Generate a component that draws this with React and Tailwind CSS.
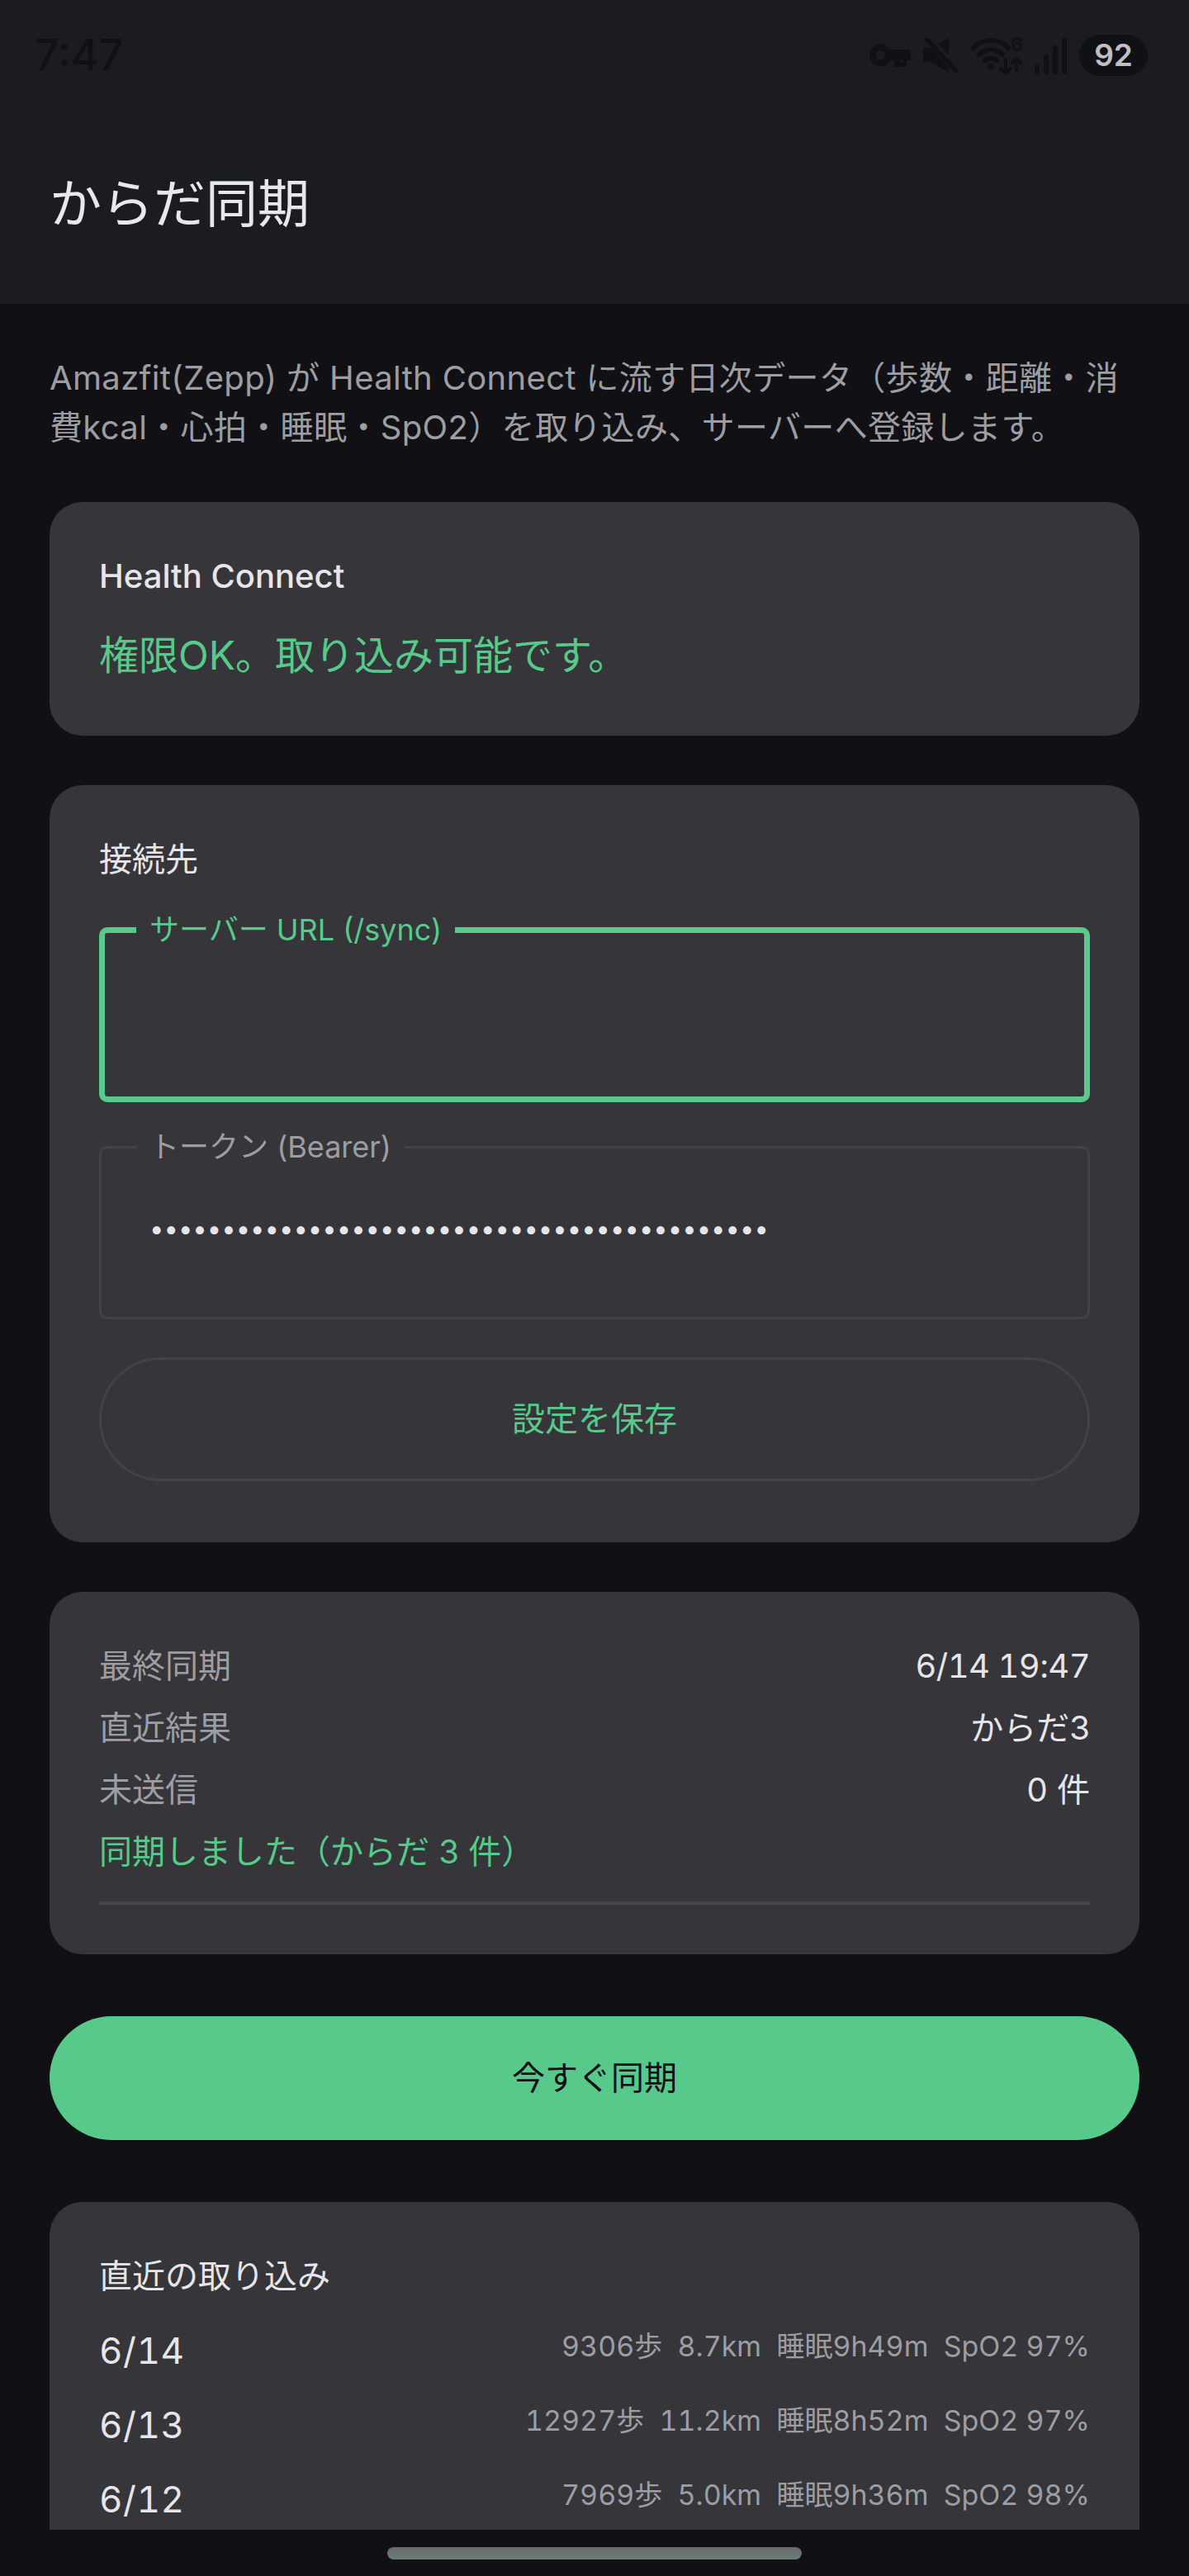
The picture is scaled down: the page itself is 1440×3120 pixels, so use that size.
const font = { fontFamily: "Inter, 'Noto Sans CJK JP', sans-serif" };

const recent = [
    { date: '6/14', detail: '9306歩  8.7km  睡眠9h49m  SpO2 97%' },
    { date: '6/13', detail: '12927歩  11.2km  睡眠8h52m  SpO2 97%' },
    { date: '6/12', detail: '7969歩  5.0km  睡眠9h36m  SpO2 98%' },
];

const syncRows = [
    { name: '最終同期', value: '6/14 19:47', valueClass: 'tabular-nums tracking-[-0.6px]' },
    { name: '直近結果', value: 'からだ3', valueClass: '' },
    { name: '未送信', value: '0 件', valueClass: '' },
];

function StatusIcons() {
    return (
        <div className="flex items-center text-[#101114]">
            <svg className="w-[50px] h-[28px]" viewBox="0 0 50 28" fill="currentColor">
                <circle cx="13.5" cy="14" r="9.5" fill="none" stroke="currentColor" strokeWidth="8" />
                <path d="M22 7h28v13h-5v8H30v-8h-8z" />
                <path d="M37 20h3v3h-3z" fill="#1b1c20" />
            </svg>
            <svg className="w-[43px] h-[42px] ml-[15px]" viewBox="0 0 43 42" fill="currentColor">
                <path d="M0 12h9L31 0v42L9 29H0z" />
                <path d="M4 -2l38 42" stroke="#1b1c20" strokeWidth="10" fill="none" />
                <path d="M4 1l36 39" stroke="currentColor" strokeWidth="5.5" fill="none" strokeLinecap="round" />
            </svg>
            <svg className="w-[62px] h-[45px] ml-[15px] overflow-visible" viewBox="0 0 62 45" fill="none" stroke="currentColor" strokeWidth="6" strokeLinecap="round">
                <path d="M3 13C13 1 35 1 45 13" />
                <path d="M10 21c8-8 20-8 28 0" />
                <path d="M17 28c4-3 10-3 14 0" />
                <circle cx="24" cy="36" r="4" fill="currentColor" stroke="none" />
                <text x="48" y="17" fontSize="23" fontWeight="700" fill="currentColor" stroke="none" style={font}>6</text>
                <path d="M42 27v17M36 38l6 6 6-6M55 40V26M50 31l5-5 5 5" strokeWidth="4" />
            </svg>
            <div className="flex items-end gap-[5px] ml-[15px] h-[45px]">
                <span className="w-[6px] h-[12px] rounded-full bg-current" />
                <span className="w-[6px] h-[24px] rounded-full bg-current" />
                <span className="w-[6px] h-[35px] rounded-full bg-current" />
                <span className="w-[6px] h-[45px] rounded-full bg-current" />
            </div>
            <div className="ml-[15px] w-[83px] h-[50px] rounded-full bg-[#101114] flex items-center justify-center text-[#c0c0c4] text-[37px] font-semibold">92</div>
        </div>
    );
}

function Card({ className = '', children }) {
    return <div className={`bg-[#35353a] rounded-[40px] p-[60px] ${className}`}>{children}</div>;
}

function Field({ label, focused, children }) {
    return (
        <fieldset className={`h-[229px] rounded-[10px] ${focused ? 'border-[7px] border-[#57ca8b]' : 'border-[3px] border-[#424247]'}`}>
            <legend className={`${focused ? 'ml-[38px] text-[#57ca8b]' : 'ml-[42px] text-[#9c9ea3]'} px-[16px] text-[36px] leading-[40px]`}>{label}</legend>
            {children}
        </fieldset>
    );
}

export default function App() {
    return (
        <div className="relative w-[1440px] h-[3120px] bg-[#111115] overflow-hidden" style={font}>
            <header className="h-[368px] bg-[#1b1c20]">
                <div className="h-[134px] pl-[42px] pr-[50px] flex items-center justify-between">
                    <span className="text-[52px] font-medium text-[#101114]">7:47</span>
                    <StatusIcons />
                </div>
                <h1 className="pl-[60px] pt-[62px] text-[63px] leading-[100px] font-normal text-[#e8e8ea]">からだ同期</h1>
            </header>

            <main className="h-[2696px] px-[60px] overflow-hidden">
                <p className="pt-[60px] text-[40px] leading-[60px] tracking-[0.35px] text-[#9c9ea3]">
                    Amazfit(Zepp) が Health Connect に流す日次データ（歩数・距離・消費kcal・心拍・睡眠・SpO2）を取り込み、サーバーへ登録します。
                </p>

                <Card className="mt-[60px]">
                    <div className="text-[40px] leading-[60px] font-medium text-[#e6e6ea]">Health Connect</div>
                    <div className="mt-[31px] mb-[2px] text-[48px] leading-[70px] text-[#57ca8b]">権限OK。取り込み可能です。</div>
                </Card>

                <Card className="mt-[60px] pb-[74px]">
                    <div className="text-[40px] leading-[60px] text-[#e6e6ea]">接続先</div>
                    <div className="mt-[35px] flex flex-col gap-[34px]">
                        <Field label="サーバー URL (/sync)" focused />
                        <Field label="トークン (Bearer)">
                            <div className="pl-[58px] pt-[49px] text-[31px] leading-[60px] text-[#e6e6ea]">
                                {'•'.repeat(43)}
                            </div>
                        </Field>
                    </div>
                    <button className="mt-[46px] w-full h-[150px] rounded-full border-[3px] border-[#424247] text-[40px] text-[#57ca8b]">
                        設定を保存
                    </button>
                </Card>

                <Card className="mt-[60px]">
                    <div className="flex flex-col gap-[15px]">
                        {syncRows.map(row => (
                            <div key={row.name} className="flex justify-between text-[40px] leading-[60px]">
                                <span className="text-[#9c9ea3]">{row.name}</span>
                                <span className={`text-[#e6e6ea] ${row.valueClass}`}>{row.value}</span>
                            </div>
                        ))}
                        <div className="text-[40px] leading-[60px] text-[#57ca8b]">同期しました（からだ 3 件）</div>
                    </div>
                    <div className="mt-[30px] h-[4px] bg-[#46464b]" />
                </Card>

                <button className="mt-[75px] w-full h-[150px] rounded-full bg-[#57ca8b] text-[40px] text-[#101114]">今すぐ同期</button>

                <Card className="mt-[75px]">
                    <div className="text-[40px] leading-[60px] text-[#e6e6ea]">直近の取り込み</div>
                    <div className="mt-[30px] flex flex-col">
                        {recent.map(row => (
                            <div key={row.date} className="h-[90px] flex items-start justify-between">
                                <span className="text-[44px] leading-[60px] tracking-[0.5px] tabular-nums text-[#e6e6ea]">{row.date}</span>
                                <span className="text-[34px] leading-[50px] whitespace-pre tabular-nums text-[#9c9ea3]">{row.detail}</span>
                            </div>
                        ))}
                    </div>
                </Card>
            </main>

            <div className="mx-auto mt-[21px] w-[502px] h-[15px] rounded-full bg-linear-to-b from-[#68696c] to-[#6a7f78]" />
        </div>
    );
}
